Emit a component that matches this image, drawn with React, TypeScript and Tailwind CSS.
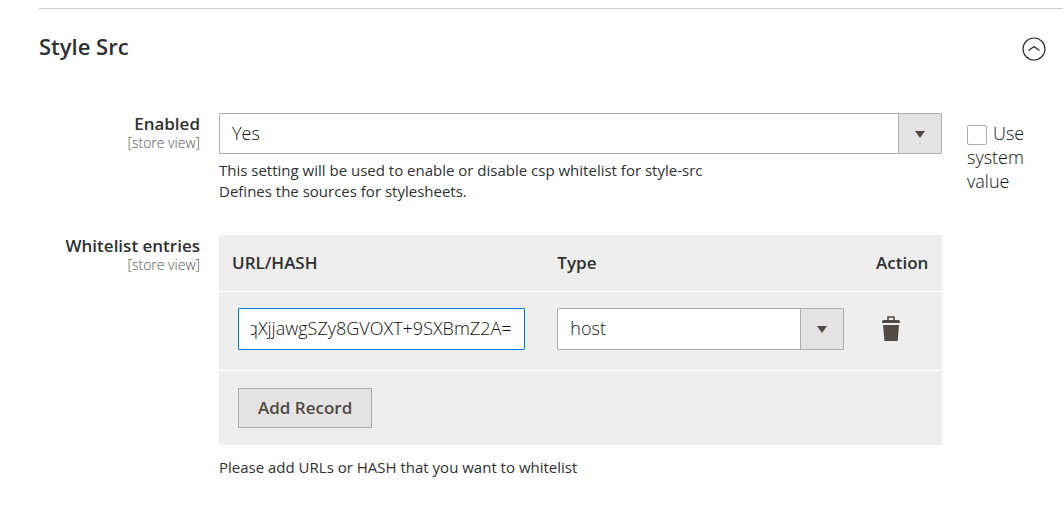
import { useLayoutEffect, useRef, useState } from "react";
import type { ReactNode } from "react";

type SelectBoxProps = {
  id: string;
  label?: string;
  options: string[];
  className: string;
};

function SelectBox({ id, label, options, className }: SelectBoxProps) {
  return (
    <div className="relative">
      <select
        id={id}
        aria-label={label}
        className={`block w-full appearance-none rounded-[1px] border border-[#adadad] bg-white pb-0.5 pl-3 pr-14 text-lg font-light text-[#111111] ${className}`}
      >
        {options.map((option) => (
          <option key={option}>{option}</option>
        ))}
      </select>
      <span className="pointer-events-none absolute inset-y-px right-px flex w-[43px] items-center justify-center border-l border-[#adadad] bg-[#e3e3e3] pt-px">
        <svg width="10" height="7" viewBox="0 0 10 7" aria-hidden="true">
          <path d="M0 0h10L5 7z" fill="#514943" />
        </svg>
      </span>
    </div>
  );
}

function FieldLabel({ htmlFor, children }: { htmlFor: string; children: ReactNode }) {
  return (
    <label htmlFor={htmlFor} className="block text-right">
      <span className="block text-[17px] font-semibold leading-[18px] text-[#303030]">{children}</span>
      <span className="block text-sm font-light leading-5 text-[#555555]">[store view]</span>
    </label>
  );
}

function Trash() {
  return (
    <svg width="18" height="26" viewBox="0 0 18 26" aria-hidden="true">
      <path d="M6 4V1h6v3" fill="none" stroke="#514943" strokeWidth="1.5" />
      <path d="M0 7V5.5Q0 4 2 4h14q2 0 2 1.5V7z" fill="#514943" />
      <path d="M1 9h16l-1.3 16H2.5z" fill="#514943" />
    </svg>
  );
}

export default function App() {
  const urlRef = useRef<HTMLInputElement>(null);
  const [url, setUrl] = useState("sha256-qXjjawgSZy8GVOXT+9SXBmZ2A=");
  const [open, setOpen] = useState(true);

  // Keep the end of a long hash in view.
  useLayoutEffect(() => {
    const input = urlRef.current;
    if (input) input.scrollLeft = input.scrollWidth;
  }, []);

  return (
    <main className="min-h-screen bg-white pl-[39px] pt-2 font-['Open_Sans','Noto_Sans',sans-serif] text-[#303030]">
      <section className="border-t border-[#cccccc] pr-[17px]">
        <header className="flex items-start justify-between pt-[22px]">
          <h2 className="text-[22px] font-semibold leading-[30px]">Style Src</h2>
          <button
            type="button"
            aria-label="Toggle section"
            aria-expanded={open}
            onClick={() => setOpen(!open)}
            className="pt-1.5"
          >
            <svg width="24" height="24" viewBox="0 0 24 24" fill="none" stroke="#303030" aria-hidden="true">
              <circle cx="12" cy="12" r="11" strokeWidth="1.2" />
              <path d="M6.5 13.5 12 9.5l5.5 4" strokeWidth="1.4" />
            </svg>
          </button>
        </header>

        {open && (
          <div className="grid grid-cols-[161px_1fr_104px] gap-y-[33px] pt-[52px]">
            <div className="pt-0.5">
              <FieldLabel htmlFor="enabled">Enabled</FieldLabel>
            </div>
            <div className="pl-[19px]">
              <SelectBox id="enabled" options={["Yes", "No"]} className="h-[41px]" />
              <p className="pt-1.5 text-[15px] leading-[21px]">
                This setting will be used to enable or disable csp whitelist for style-src
                <br />
                Defines the sources for stylesheets.
              </p>
            </div>
            <label className="pl-[25px] pt-2 text-lg font-light leading-6 text-[#111111]">
              <input
                type="checkbox"
                className="mr-1.5 size-5 appearance-none rounded-xs border border-[#adadad] bg-white align-[-5px] checked:bg-[#514943]"
              />
              Use system value
            </label>

            <div className="pt-0.5">
              <FieldLabel htmlFor="url">Whitelist entries</FieldLabel>
            </div>
            <div className="pl-[19px]">
              <table className="w-full table-fixed bg-[#eeeeee] text-left text-[17px]">
                <thead>
                  <tr className="h-14">
                    <th className="w-[45%] pl-[13px] font-semibold">URL/HASH</th>
                    <th className="pl-[13px] font-semibold">Type</th>
                    <th className="w-[79px] pl-[13px] font-semibold">Action</th>
                  </tr>
                </thead>
                <tbody>
                  <tr className="border-y border-white">
                    <td className="px-[19px] pb-5 pt-4">
                      <input
                        ref={urlRef}
                        id="url"
                        type="text"
                        value={url}
                        onChange={(event) => setUrl(event.target.value)}
                        className="block h-[42px] w-full rounded-[1px] border border-[#007bdb] bg-white px-3 pb-0.5 text-lg font-light text-[#111111] outline-none"
                      />
                    </td>
                    <td className="pb-5 pl-[13px] pr-[19px] pt-4">
                      <SelectBox id="type" label="Type" options={["host", "hash"]} className="h-[42px]" />
                    </td>
                    <td className="pb-5 pl-[19px] pt-4">
                      <button type="button" aria-label="Delete" className="block">
                        <Trash />
                      </button>
                    </td>
                  </tr>
                </tbody>
                <tfoot>
                  <tr>
                    <td colSpan={3} className="px-[19px] py-[17px]">
                      <button
                        type="button"
                        className="block h-10 border border-[#adadad] bg-[#e3e3e3] px-[19px] font-semibold text-[#514943]"
                      >
                        Add Record
                      </button>
                    </td>
                  </tr>
                </tfoot>
              </table>
              <p className="pt-3 text-[15px] leading-[21px]">Please add URLs or HASH that you want to whitelist</p>
            </div>
          </div>
        )}
      </section>
    </main>
  );
}
